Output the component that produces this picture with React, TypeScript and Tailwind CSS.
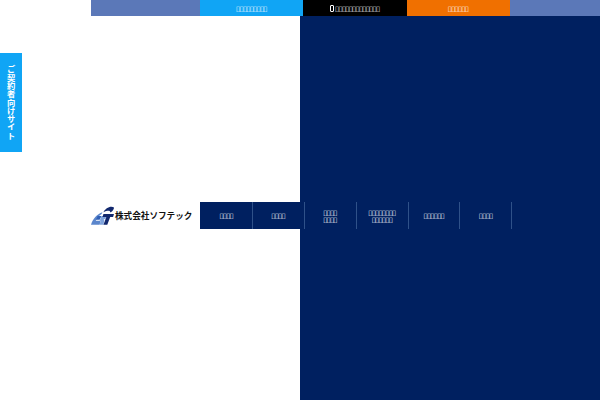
const boxes = (n: number) => "\uE000".repeat(n);

function Tab({ className, children }: { className: string; children: React.ReactNode }) {
  return <div className={`flex h-4 w-[103.3px] items-center justify-center text-white ${className}`}>{children}</div>;
}

function Logo() {
  return (
    <div className="flex h-[27px] w-[109px] items-center">
      <svg viewBox="0 0 24 20" className="h-[20px] w-[23px] shrink-0">
        <path d="M0 19 C2 13 6 8 12 6 L11 8 C8 10 6 13 5 15 L10 15 L9 19 Z" fill="#5b86cc" />
        <path d="M7 10 h4 l-2 4 h-4 Z" fill="#2f5fb5" />
        <path d="M11 10 h5 l-1 3 h-2 l1 1 l-1 5 h-4 l1 -4 h-1 Z" fill="#7ea3dc" />
        <path d="M13 8 h11 l-1 3 h-3 l-3 8 h-4 l3 -8 h-4 Z" fill="#12286e" />
        <path d="M13 6 C15 2 20 -1 24 1 C24 3 22 6 20 6 C20 4 17 4 13 6 Z" fill="#12286e" />
      </svg>
      <span className="ml-px whitespace-nowrap text-[8.6px] font-bold leading-none tracking-normal text-[#111] [font-family:'Noto_Sans_CJK_JP',sans-serif]">株式会社ソフテック</span>
    </div>
  );
}

function NavItem({ lines }: { lines: string[] }) {
  return (
    <div className="flex h-[27px] w-[51.9px] flex-col items-center justify-center border-r border-[#2f5189] pt-px text-[6px] leading-[7.5px] tracking-[-0.2px] text-white">
      {lines.map((l, i) => <span key={i}>{l}</span>)}
    </div>
  );
}

export default function App() {
  return (
    <div className="relative flex h-[400px] w-[600px] flex-col overflow-hidden bg-white text-[6px] tracking-[-0.2px] [font-family:'DejaVu_Sans',sans-serif]">
      <div className="flex pl-[91px]">
        <div className="h-4 w-[109px] bg-[#5b78b8]" />
        <Tab className="bg-[#10a5f5]">{boxes(9)}</Tab>
        <Tab className="bg-black"><span className="mr-px inline-block h-[7px] w-[4px] rounded-[1px] border border-white" />{boxes(13)}</Tab>
        <Tab className="bg-[#f07000]">{boxes(6)}</Tab>
        <div className="h-4 flex-1 bg-[#5b78b8]" />
      </div>
      <div className="flex flex-1">
        <div className="w-[300px]" />
        <div className="flex-1 bg-[#002060]" />
      </div>
      <div className="absolute left-0 top-[53px] flex h-[99px] w-[22px] items-center justify-center bg-[#10a5f5] text-[8.3px] font-bold leading-none tracking-normal text-white [font-family:'Noto_Sans_CJK_JP',sans-serif] [text-orientation:upright] [writing-mode:vertical-rl]">ご契約者向けサイト</div>
      <div className="absolute left-[91px] top-[202px] flex items-center">
        <Logo />
        <div className="flex h-[27px] bg-[#002060] pl-px">
          <NavItem lines={[boxes(4)]} />
          <NavItem lines={[boxes(4)]} />
          <NavItem lines={[boxes(4), boxes(4)]} />
          <NavItem lines={[boxes(8), boxes(6)]} />
          <NavItem lines={[boxes(6)]} />
          <NavItem lines={[boxes(4)]} />
        </div>
      </div>
    </div>
  );
}
